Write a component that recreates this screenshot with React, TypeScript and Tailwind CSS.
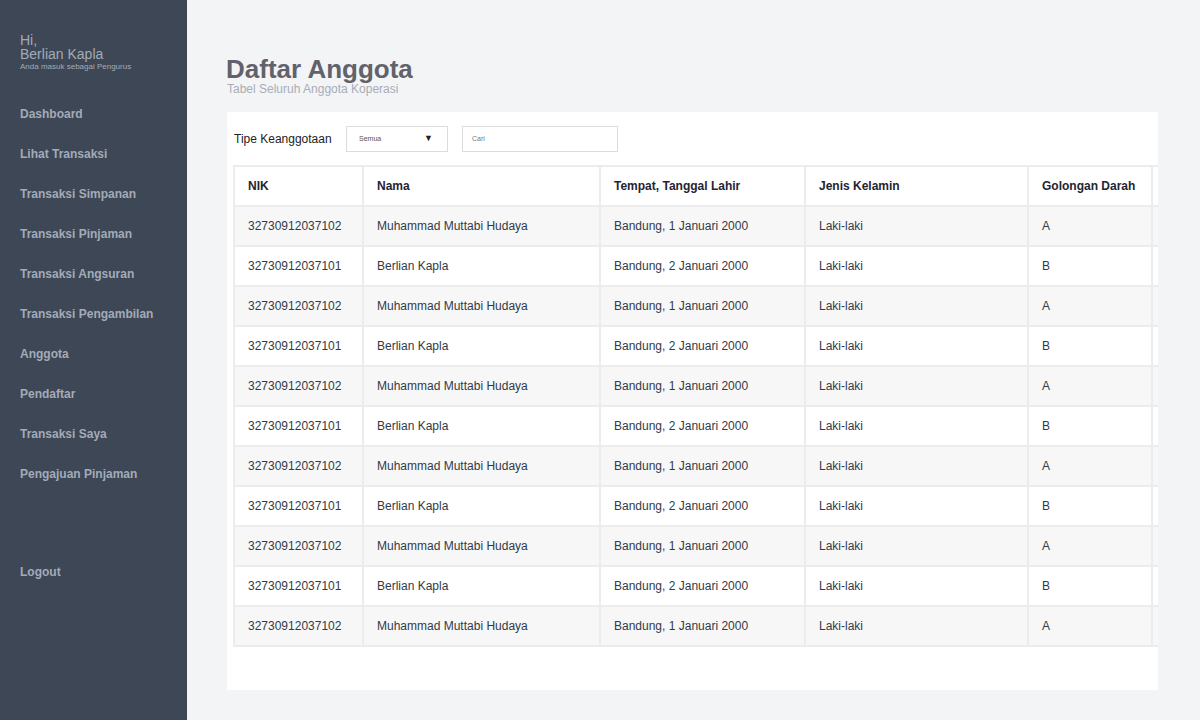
import React from 'react';

const menu = [
  'Dashboard',
  'Lihat Transaksi',
  'Transaksi Simpanan',
  'Transaksi Pinjaman',
  'Transaksi Angsuran',
  'Transaksi Pengambilan',
  'Anggota',
  'Pendaftar',
  'Transaksi Saya',
  'Pengajuan Pinjaman',
];

const memberA = { nik: '32730912037102', nama: 'Muhammad Muttabi Hudaya', ttl: 'Bandung, 1 Januari 2000', jk: 'Laki-laki', gol: 'A' };
const memberB = { nik: '32730912037101', nama: 'Berlian Kapla', ttl: 'Bandung, 2 Januari 2000', jk: 'Laki-laki', gol: 'B' };

const rows = Array.from({ length: 11 }, (_, i) => (i % 2 === 0 ? memberA : memberB));

const App: React.FC = () => {
  return (
    <div className="flex w-[1200px] h-[720px] overflow-hidden bg-[#f3f4f6] font-['Liberation_Sans',Arial,sans-serif]">
      {/* Sidebar */}
      <aside className="w-[187px] shrink-0 bg-[#3d4756] text-[#a3abb8] pl-5 pt-[33px]">
        <div className="text-[14px] leading-[14px]">Hi,</div>
        <div className="text-[14px] leading-[14px]">Berlian Kapla</div>
        <div className="text-[8px] leading-[9px] mt-[1px]">Anda masuk sebagai Pengurus</div>

        <nav className="mt-[23px] flex flex-col">
          {menu.map(item => (
            <a key={item} className="h-10 flex items-center text-[12px] font-bold">
              {item}
            </a>
          ))}
        </nav>
        <a className="mt-[58px] h-10 flex items-center text-[12px] font-bold">Logout</a>
      </aside>

      {/* Konten */}
      <main className="flex-1 min-w-0 pl-10 pr-[42px] pt-[54px]">
        <h1 className="text-[26px] leading-[30px] font-bold text-[#61626b] -ml-[1px]">Daftar Anggota</h1>
        <p className="text-[12px] leading-[12px] text-[#a8adb6] -mt-[1px]">Tabel Seluruh Anggota Koperasi</p>

        <div className="mt-[17px] bg-white h-[578px] pl-[6px] pt-[14px] overflow-hidden">
          <div className="flex items-center h-[26px] pl-[1px]">
            <span className="text-[12px] text-[#222] w-[112px]">Tipe Keanggotaan</span>
            <div className="w-[102px] h-[26px] border border-[#dcdcdc] flex items-center justify-between pl-3 pr-[14px]">
              <span className="text-[7px] text-[#555]">Semua</span>
              <span className="text-[9px] text-[#222]">▼</span>
            </div>
            <div className="ml-[14px] w-[156px] h-[26px] border border-[#dcdcdc] flex items-center pl-[9px]">
              <span className="text-[7px] text-[#777]">Cari</span>
            </div>
          </div>

          {/* tabel melebar, sisanya terpotong di tepi kartu */}
          <div className="mt-[13px] overflow-hidden">
            <table className="table-fixed border-collapse w-[1050px] text-[12px]">
              <colgroup>
                <col className="w-[129px]" />
                <col className="w-[237px]" />
                <col className="w-[205px]" />
                <col className="w-[223px]" />
                <col className="w-[124px]" />
                <col className="w-[132px]" />
              </colgroup>
              <thead>
                <tr className="h-10">
                  {['NIK', 'Nama', 'Tempat, Tanggal Lahir', 'Jenis Kelamin', 'Golongan Darah', ''].map((h, i) => (
                    <th key={i} className="border-2 border-[#ececec] text-left pl-[13px] font-bold text-[#1f2433] whitespace-nowrap">
                      {h}
                    </th>
                  ))}
                </tr>
              </thead>
              <tbody>
                {rows.map((r, i) => (
                  <tr key={i} className={`h-10 ${i % 2 === 0 ? 'bg-[#f7f7f7]' : 'bg-white'}`}>
                    <td className="border-2 border-[#ececec] pl-[13px] text-[#333a47]">{r.nik}</td>
                    <td className="border-2 border-[#ececec] pl-[13px] text-[#333a47]">{r.nama}</td>
                    <td className="border-2 border-[#ececec] pl-[13px] text-[#333a47]">{r.ttl}</td>
                    <td className="border-2 border-[#ececec] pl-[13px] text-[#333a47]">{r.jk}</td>
                    <td className="border-2 border-[#ececec] pl-[13px] text-[#333a47]">{r.gol}</td>
                    <td className="border-2 border-[#ececec] pl-[13px] text-[#333a47]"></td>
                  </tr>
                ))}
              </tbody>
            </table>
          </div>
        </div>
      </main>
    </div>
  );
};

export default App;
